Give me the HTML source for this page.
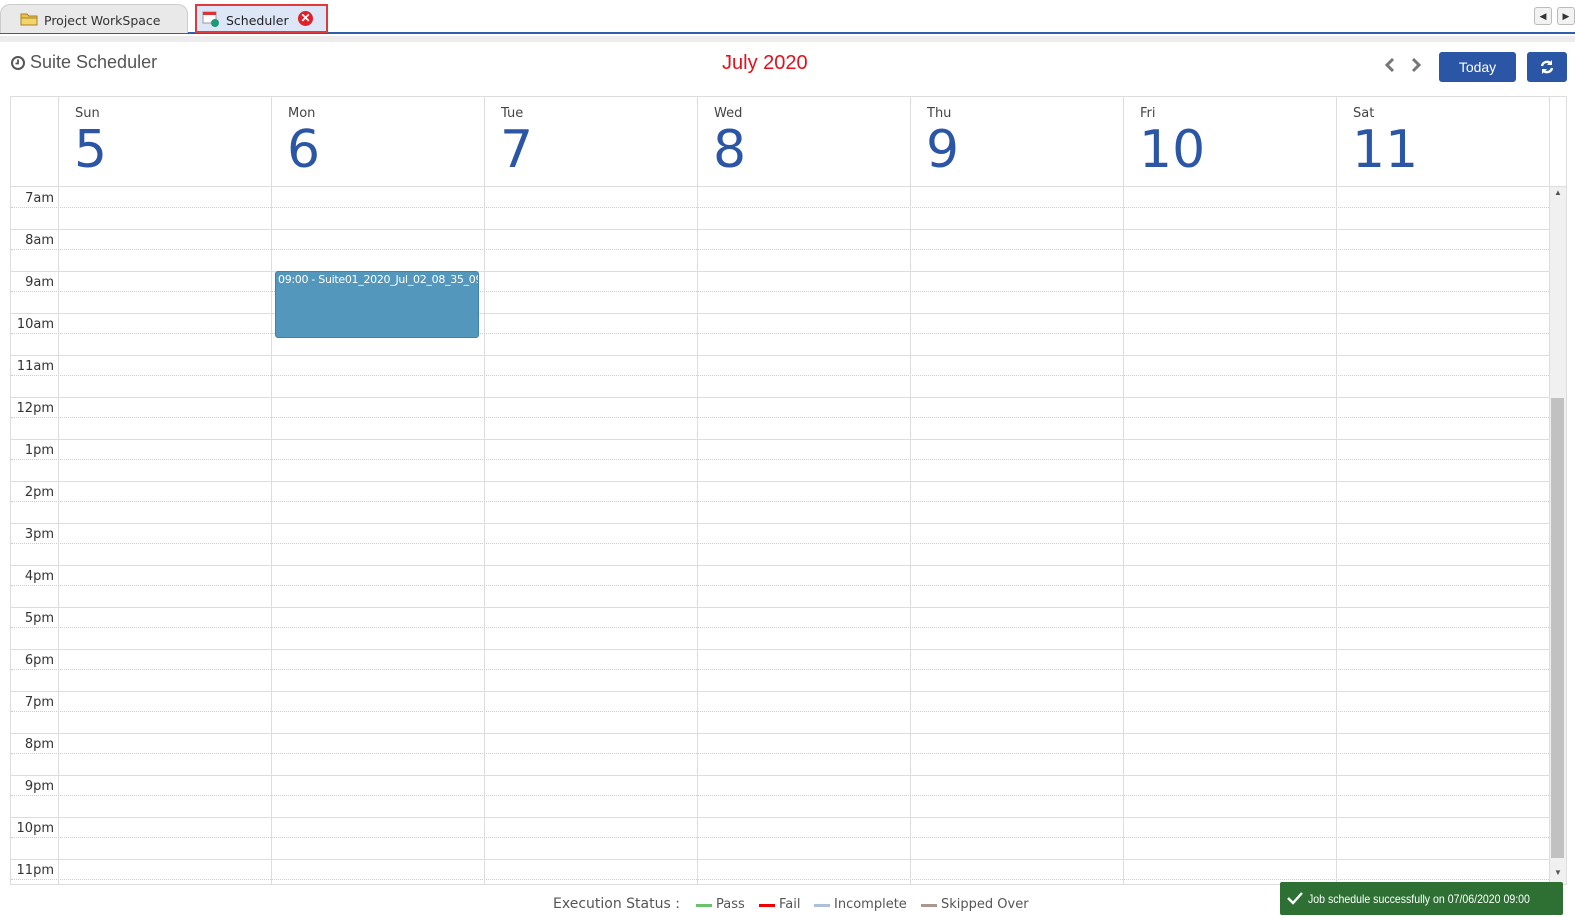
<!DOCTYPE html>
<html><head><meta charset="utf-8">
<style>
*{box-sizing:border-box;margin:0;padding:0}
body{width:1575px;height:917px;background:#fff;font-family:"Liberation Sans",sans-serif;position:relative;overflow:hidden;color:#333}
.abs{position:absolute}
.seg{font-family:"DejaVu Sans","Liberation Sans",sans-serif}
</style></head><body>
<div class="abs" style="left:0;top:0;width:1575px;height:34px;background:#fff;border-bottom:2px solid #2e5fa8"></div>
<div class="abs" style="left:0;top:4px;width:188px;height:29px;background:#e9e9e9;border:1px solid #ccc;border-bottom:none;border-radius:10px 10px 0 0"></div>
<svg class="abs" style="left:20px;top:12px" width="18" height="14"><path d="M1 2h6l2 2h8v9H1z" fill="#e8c04a" stroke="#a98320"/><path d="M1 6h16v7H1z" fill="#f3d46a" stroke="#a98320"/></svg>
<div class="abs seg" style="left:44px;top:13px;font-size:12.5px;color:#333">Project WorkSpace</div>
<div class="abs" style="left:195px;top:4px;width:133px;height:29px;background:#dce6f7;border:2px solid #e0393d"></div>
<svg class="abs" style="left:202px;top:10px" width="18" height="18"><rect x="1" y="2" width="13" height="11" fill="#fff" stroke="#999"/><rect x="1" y="2" width="13" height="3" fill="#d33"/><circle cx="13" cy="13" r="4" fill="#1a9a7a"/></svg>
<div class="abs seg" style="left:226px;top:13px;font-size:12.5px;color:#222">Scheduler</div>
<div class="abs" style="left:298px;top:11px;width:15px;height:15px;border-radius:50%;background:#e0202a;color:#fff;font-size:12px;font-weight:bold;line-height:15px;text-align:center">✕</div>
<div class="abs" style="left:1534px;top:7px;width:18px;height:18px;border:1px solid #bbb;border-radius:3px;background:#f2f2f2;font-size:9px;text-align:center;line-height:16px">◀</div>
<div class="abs" style="left:1557px;top:7px;width:18px;height:18px;border:1px solid #bbb;border-radius:3px;background:#f2f2f2;font-size:9px;text-align:center;line-height:16px">▶</div>
<div class="abs" style="left:0;top:36px;width:1575px;height:6px;background:#ececec"></div>
<svg class="abs" style="left:10px;top:55px" width="16" height="16"><circle cx="8" cy="8" r="6" fill="none" stroke="#555" stroke-width="2"/><path d="M8 4.5V8.5H5.5" fill="none" stroke="#555" stroke-width="1.8"/></svg>
<div class="abs" style="left:30px;top:52px;font-size:18px;color:#555">Suite Scheduler</div>
<div class="abs" style="left:722px;top:52px;font-size:20px;color:#e3101c">July 2020</div>
<svg class="abs" style="left:1381px;top:56px" width="44" height="18"><path d="M12 3l-6 6 6 6M32 3l6 6-6 6" fill="none" stroke="#777" stroke-width="3"/></svg>
<div class="abs" style="left:1439px;top:52px;width:77px;height:30px;background:#2b55a5;border-radius:3px;color:#fff;font-size:14px;text-align:center;line-height:30px">Today</div>
<div class="abs" style="left:1527px;top:52px;width:40px;height:30px;background:#2b55a5;border-radius:3px"></div>
<svg class="abs" style="left:1539px;top:59px" width="16" height="16"><path d="M3 7a5 5 0 0 1 9-2M13 9a5 5 0 0 1-9 2" fill="none" stroke="#fff" stroke-width="2.4"/><path d="M13 1v5H8zM3 15v-5h5z" fill="#fff"/></svg>
<div class="abs" style="left:10px;top:96px;width:1557px;height:789px;border:1px solid #ddd"></div>
<div class="abs" style="left:10px;top:186px;width:1557px;height:1px;background:#ddd"></div>
<div id="hdr"></div>
<div class="abs" id="body" style="left:11px;top:187px;width:1538px;height:697px;overflow:hidden"></div>
<div class="abs" style="left:1549px;top:187px;width:17px;height:697px;background:#f0f0f0;border-left:1px solid #ddd"></div>
<div class="abs" style="left:1551px;top:188px;width:14px;font-size:8px;color:#555;text-align:center">▲</div>
<div class="abs" style="left:1551px;top:868px;width:14px;font-size:8px;color:#555;text-align:center">▼</div>
<div class="abs" style="left:1551px;top:398px;width:13px;height:460px;background:#c1c1c1"></div>
<div class="abs seg" style="left:275px;top:271px;width:204px;height:67px;background:#5397bc;border:1px solid #3d82aa;border-radius:3px;color:#fff;font-size:11px;padding:1px 2px;white-space:nowrap;overflow:hidden;letter-spacing:-0.3px">09:00 - Suite01_2020_Jul_02_08_35_09</div>
<div class="abs seg" style="left:553px;top:896px;font-size:14px;color:#555;white-space:nowrap">Execution Status :</div>
<div class="abs" style="left:696px;top:904px;width:16px;height:3px;background:#6ac36a"></div>
<div class="abs seg" style="left:716px;top:897px;font-size:13px;color:#555">Pass</div>
<div class="abs" style="left:759px;top:904px;width:16px;height:3px;background:#e00"></div>
<div class="abs seg" style="left:779px;top:897px;font-size:13px;color:#555">Fail</div>
<div class="abs" style="left:814px;top:904px;width:16px;height:3px;background:#aac0dc"></div>
<div class="abs seg" style="left:834px;top:897px;font-size:13px;color:#555">Incomplete</div>
<div class="abs" style="left:921px;top:904px;width:16px;height:3px;background:#a89890"></div>
<div class="abs seg" style="left:941px;top:897px;font-size:13px;color:#555">Skipped Over</div>
<div class="abs" style="left:1280px;top:882px;width:283px;height:33px;background:#2e6f34;border-radius:2px;color:#fff;line-height:33px;padding-left:28px;white-space:nowrap;font-family:'Liberation Sans',sans-serif;overflow:hidden"><span style="display:inline-block;font-size:12px;transform:scaleX(0.88);transform-origin:left center">Job schedule successfully on 07/06/2020 09:00</span></div>
<svg class="abs" style="left:1287px;top:891px" width="16" height="14"><path d="M1 7l5 5L15 2" fill="none" stroke="#fff" stroke-width="2.4"/></svg>
<script>
var days=[["Sun","5"],["Mon","6"],["Tue","7"],["Wed","8"],["Thu","9"],["Fri","10"],["Sat","11"]];
var h="";
for(var i=0;i<7;i++){var x=58+i*213;
h+='<div class="abs" style="left:'+x+'px;top:96px;width:1px;height:90px;background:#ddd"></div>';
h+='<div class="abs seg" style="left:'+(x+17)+'px;top:106px;font-size:13px;color:#444">'+days[i][0]+'</div>';
h+='<div class="abs seg" style="left:'+(x+16)+'px;top:119px;font-size:52px;color:#2b55a5;line-height:62px">'+days[i][1]+'</div>';}
h+='<div class="abs" style="left:1549px;top:96px;width:1px;height:90px;background:#ddd"></div>';
document.getElementById("hdr").innerHTML=h;
var labels=["7am","8am","9am","10am","11am","12pm","1pm","2pm","3pm","4pm","5pm","6pm","7pm","8pm","9pm","10pm","11pm"];
var b="";
for(var r=0;r<labels.length;r++){var y=r*42;
if(r>0)b+='<div class="abs" style="left:0;top:'+y+'px;width:1538px;height:1px;background:#ddd"></div>';
b+='<div class="abs" style="left:0;top:'+(y+20)+'px;width:1538px;height:0;border-top:1px dotted #ccc"></div>';
b+='<div class="abs seg" style="left:0;top:'+(y+4)+'px;width:43px;text-align:right;font-size:13px;color:#333">'+labels[r]+'</div>';}
for(var i=0;i<7;i++){b+='<div class="abs" style="left:'+(47+i*213)+'px;top:0;width:1px;height:697px;background:#ddd"></div>';}
document.getElementById("body").innerHTML=b;
</script>
</body></html>
